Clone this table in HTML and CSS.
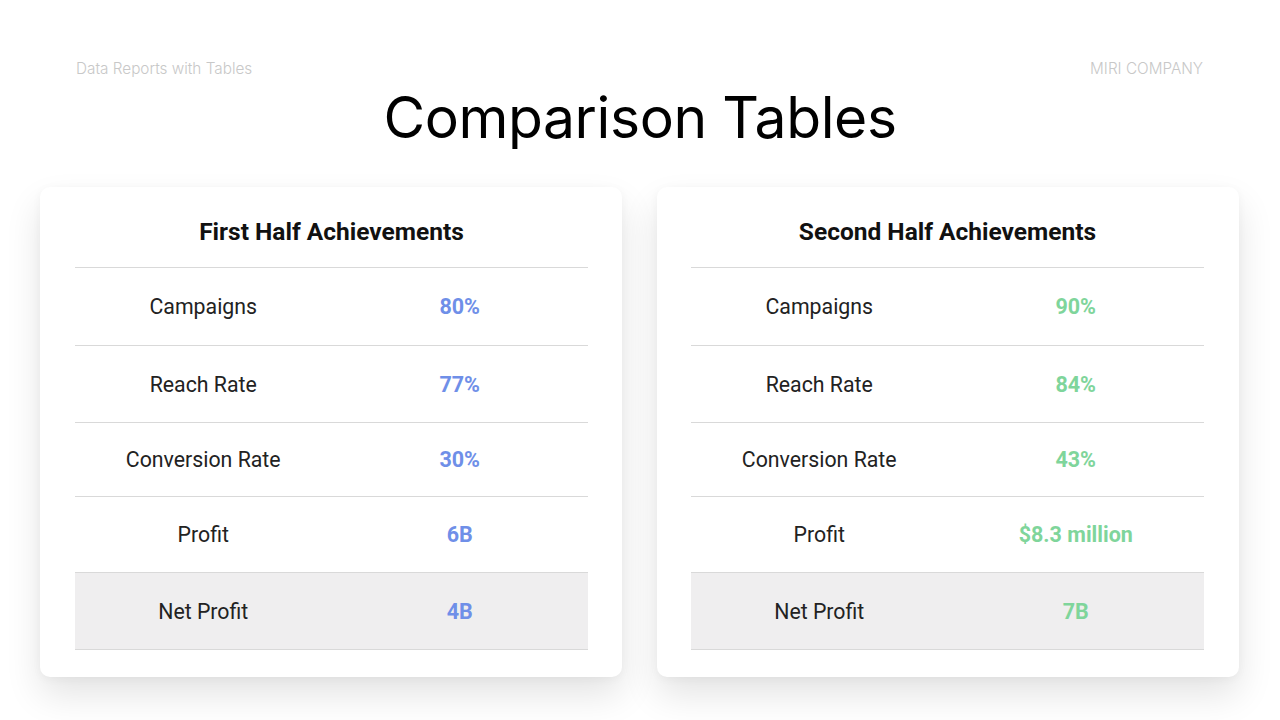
FILE: index.html
```html
<!DOCTYPE html>
<html lang="en">
<head>
<meta charset="utf-8">
<link rel="stylesheet" href="styles.css">
</head>
<body>
<div class="slide">
  <div class="topbar">
    <span class="meta">Data Reports with Tables</span>
    <span class="meta">MIRI COMPANY</span>
  </div>
  <h1 class="title">Comparison Tables</h1>
  <div class="cards">
    <section class="card card-left">
      <h2 class="card-title">First Half Achievements</h2>
      <div class="rows">
        <div class="row"><span class="label">Campaigns</span><span class="value blue">80%</span></div>
        <div class="row"><span class="label">Reach Rate</span><span class="value blue">77%</span></div>
        <div class="row"><span class="label">Conversion Rate</span><span class="value blue">30%</span></div>
        <div class="row"><span class="label">Profit</span><span class="value blue">6B</span></div>
        <div class="row shaded"><span class="label">Net Profit</span><span class="value blue">4B</span></div>
      </div>
    </section>
    <section class="card card-right">
      <h2 class="card-title">Second Half Achievements</h2>
      <div class="rows">
        <div class="row"><span class="label">Campaigns</span><span class="value green">90%</span></div>
        <div class="row"><span class="label">Reach Rate</span><span class="value green">84%</span></div>
        <div class="row"><span class="label">Conversion Rate</span><span class="value green">43%</span></div>
        <div class="row"><span class="label">Profit</span><span class="value green">$8.3 million</span></div>
        <div class="row shaded"><span class="label">Net Profit</span><span class="value green">7B</span></div>
      </div>
    </section>
  </div>
</div>
</body>
</html>
```

FILE: styles.css
```css
* { box-sizing: border-box; }
html, body { margin: 0; padding: 0; }
body {
  background: #ffffff;
  font-family: "Roboto", "Liberation Sans", sans-serif;
}
.slide {
  width: 1280px;
  height: 720px;
  overflow: hidden;
  display: flex;
  flex-direction: column;
}
.topbar {
  display: flex;
  justify-content: space-between;
  padding: 59px 77px 0 76px;
  height: 78px;
}
.meta {
  font-family: "Inter", sans-serif;
  font-weight: 300;
  font-size: 15.3px;
  line-height: 20px;
  color: #c8c8c8;
}
.title {
  margin: 0;
  text-align: center;
  font-family: "Inter", sans-serif;
  font-weight: 400;
  font-size: 57px;
  line-height: 80px;
  letter-spacing: -0.4px;
  color: #000;
  height: 109px;
}
.cards {
  display: flex;
  gap: 35px;
  padding: 0 41px 0 40px;
}
.card {
  flex: 1;
  height: 490px;
  background: #fff;
  border-radius: 10px;
  box-shadow: 0 18px 36px rgba(0,0,0,0.11), 0 2px 10px rgba(0,0,0,0.04);
}
.card-left { padding: 0 34px 0 35px; }
.card-right { padding: 0 35px 0 34px; }
.card-title {
  margin: 0;
  height: 81px;
  display: flex;
  align-items: center;
  justify-content: center;
  padding-top: 8px;
  font-size: 24.5px;
  font-weight: 700;
  color: #111;
  border-bottom: 1.5px solid #d9d9d9;
}
.rows { display: flex; flex-direction: column; }
.row {
  display: grid;
  grid-template-columns: 1fr 1fr;
  align-items: center;
  height: 77px;
  border-bottom: 1.5px solid #d9d9d9;
}
.row:nth-child(1) { height: 78px; }
.row:nth-child(3) { height: 74px; }
.row:nth-child(4) { height: 76px; }
.row.shaded { background: #efeeef; }
.label {
  text-align: center;
  font-size: 21.3px;
  font-weight: 400;
  color: #222;
}
.value {
  text-align: center;
  font-size: 21.5px;
  font-weight: 700;
}
.blue { color: #6f8fe8; }
.green { color: #7fd59b; }
```
